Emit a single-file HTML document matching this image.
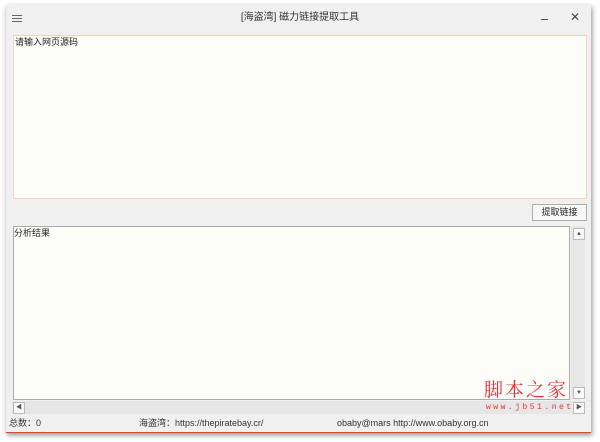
<!DOCTYPE html>
<html><head><meta charset="utf-8"><style>
body{margin:0;width:600px;height:442px;background:#fff;position:relative;overflow:hidden;font-family:"Liberation Sans","Noto Sans CJK SC",sans-serif;font-size:9px;line-height:11px;color:#222}
.win{position:absolute;left:6px;top:5px;width:585px;height:427px;background:#f0f0f0;box-shadow:1px 2px 5px rgba(0,0,0,.45);border-bottom:1px solid #c8502a}
.a{position:absolute}
.ta{position:absolute;background:#fcfdf9}
</style></head><body>
<div class="win"></div>
<div class="a" style="left:12px;top:15px;width:10px;height:1px;background:#666;box-shadow:0 3px 0 #666,0 6px 0 #666"></div>
<div class="a" style="left:0;width:600px;top:12px;text-align:center;font-size:10px;color:#333">[海盗湾] 磁力链接提取工具</div>
<div class="a" style="left:541px;top:19px;width:7px;height:1px;background:#555"></div>
<div class="a" style="left:570px;top:11px;font-size:12px;color:#444;line-height:12px">✕</div>
<div class="ta" style="left:13px;top:35px;width:572px;height:162px;border:1px solid #f6d0b8"></div>
<div class="a" style="left:15px;top:37px">请输入网页源码</div>
<div class="a" style="left:532px;top:204px;width:53px;height:15px;border:1px solid #adadad;background:#f7f7f7;text-align:center;line-height:15px">提取链接</div>
<div class="ta" style="left:13px;top:226px;width:555px;height:172px;border:1px solid #aaa"></div>
<div class="a" style="left:14px;top:228px">分析结果</div>
<div class="a" style="left:571px;top:226px;width:14px;height:173px;background:#e6e6e6"></div>
<div class="a" style="left:573px;top:228px;width:10px;height:10px;border:1px solid #bbb;background:#fafafa;font-size:6px;text-align:center;line-height:10px;color:#555">▲</div>
<div class="a" style="left:573px;top:387px;width:10px;height:10px;border:1px solid #bbb;background:#fafafa;font-size:6px;text-align:center;line-height:10px;color:#555">▼</div>
<div class="a" style="left:12px;top:401px;width:573px;height:13px;background:#e6e6e6"></div>
<div class="a" style="left:13px;top:402px;width:10px;height:10px;border:1px solid #bbb;background:#fafafa;font-size:6px;text-align:center;line-height:10px;color:#555">◀</div>
<div class="a" style="left:573px;top:402px;width:10px;height:10px;border:1px solid #bbb;background:#fafafa;font-size:6px;text-align:center;line-height:10px;color:#555">▶</div>
<div class="a" style="left:484px;top:378px;font-size:19px;line-height:22px;color:#e8313a;letter-spacing:2px;font-family:'Noto Serif CJK SC',serif">脚本之家</div>
<div class="a" style="left:486px;top:403px;font-size:8px;line-height:9px;color:#e8313a;letter-spacing:2.5px;font-family:'Liberation Mono',monospace">www.jb51.net</div>
<div class="a" style="left:9px;top:418px;color:#333">总数：0</div>
<div class="a" style="left:139px;top:418px;color:#333">海盗湾：https://thepiratebay.cr/</div>
<div class="a" style="left:337px;top:418px;color:#333">obaby@mars http://www.obaby.org.cn</div>
</body></html>
